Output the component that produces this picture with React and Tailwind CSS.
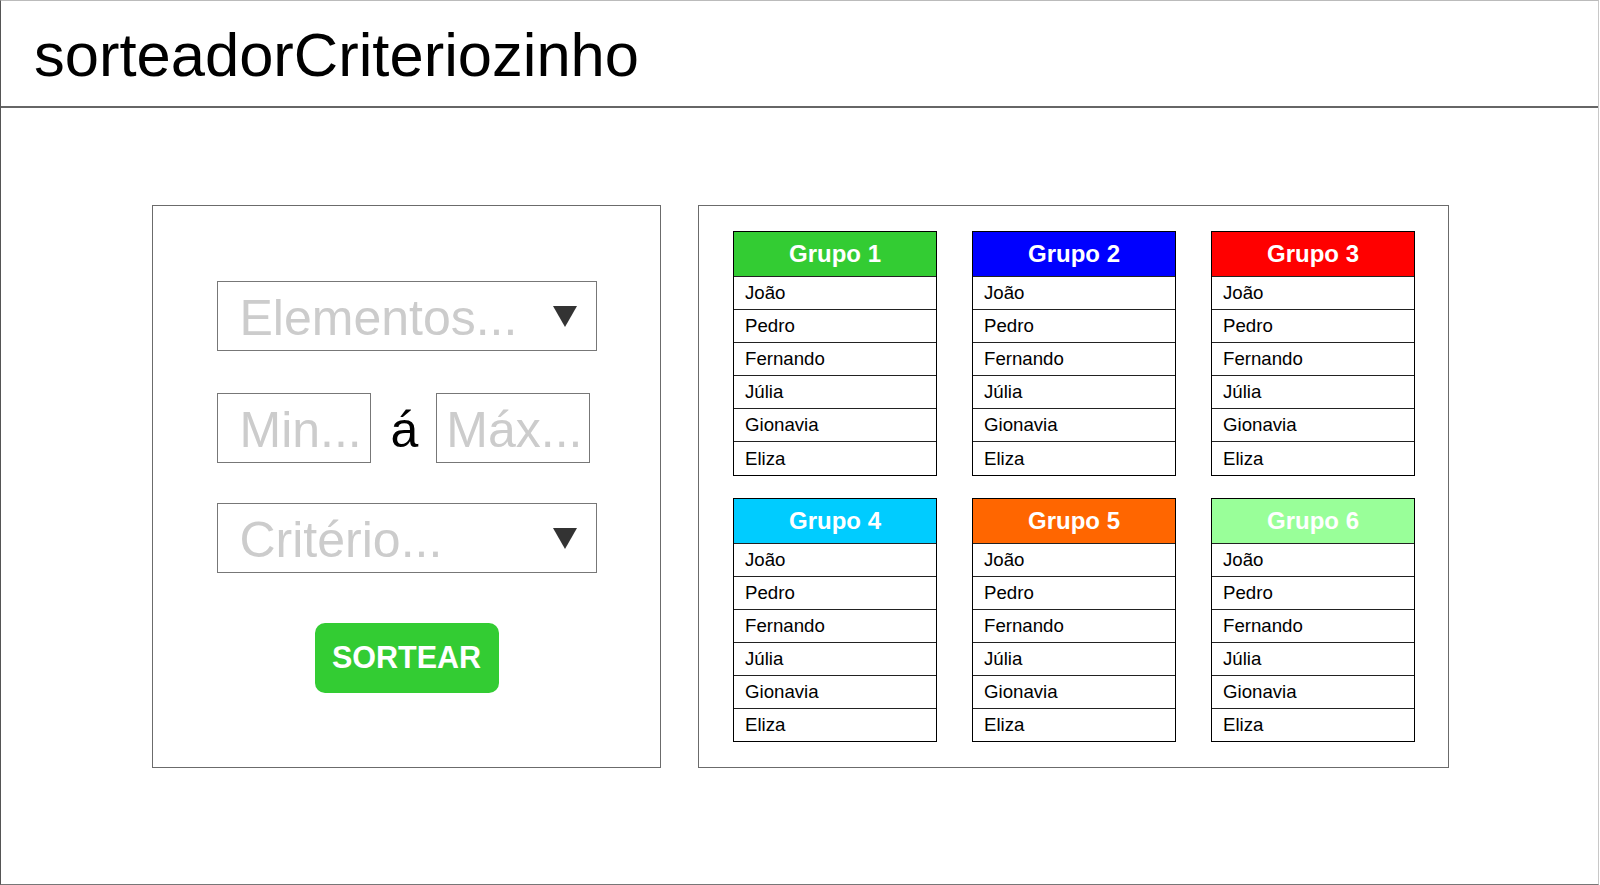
const grupos = [
  { nome: "Grupo 1", cor: "bg-[#33cc33]" },
  { nome: "Grupo 2", cor: "bg-[#0000ff]" },
  { nome: "Grupo 3", cor: "bg-[#ff0000]" },
  { nome: "Grupo 4", cor: "bg-[#00ccff]" },
  { nome: "Grupo 5", cor: "bg-[#ff6600]" },
  { nome: "Grupo 6", cor: "bg-[#99ff99]" },
];

const nomes = ["João", "Pedro", "Fernando", "Júlia", "Gionavia", "Eliza"];

function Seta() {
  return (
    <svg width="24" height="21" viewBox="0 0 24 21" className="shrink-0">
      <polygon points="0,0 24,0 12,21" fill="#333333" />
    </svg>
  );
}

function Select({ texto }) {
  return (
    <div className="flex h-[70px] w-[380px] items-center justify-between border border-[#777] pl-[22px] pr-[19px]">
      <span className="pt-[4px] text-[50px] leading-[50px] text-[#cccccc]">{texto}</span>
      <Seta />
    </div>
  );
}

function Grupo({ nome, cor }) {
  return (
    <div className="w-[204px] border border-black">
      <div className={`flex h-[44px] items-center justify-center text-[24px] font-bold text-white ${cor}`}>
        {nome}
      </div>
      {nomes.map((n) => (
        <div key={n} className="box-border flex h-[33.1px] items-center border-t border-[#222] pl-[11px] text-[18.67px] text-black">
          {n}
        </div>
      ))}
    </div>
  );
}

export default function App() {
  return (
    <div
      className="box-border h-[885px] w-[1599px] border-t border-r border-b border-l border-t-[#bbbbbb] border-r-[#c8c8c8] border-b-[#777777] border-l-[#555555] bg-white"
      style={{ fontFamily: '"Liberation Sans", Arial, sans-serif' }}
    >
      <header className="flex h-[107px] items-start border-b-2 border-[#666] pl-[33px] pt-[23px]">
        <h1 className="text-[61.5px] leading-[61px] text-black">sorteadorCriteriozinho</h1>
      </header>

      <main className="flex gap-[37px] pl-[151px] pt-[97px]">
        <section className="flex h-[563px] w-[509px] flex-col items-center border border-[#6b6b6b] pt-[75px]">
          <Select texto="Elementos..." />

          <div className="mt-[42px] flex h-[70px] w-[380px] items-center">
            <div className="flex h-[70px] w-[154px] items-center border border-[#777] pl-[22px]">
              <span className="pt-[4px] text-[50px] leading-[50px] text-[#cccccc]">Min...</span>
            </div>
            <span className="ml-[20px] mr-[18px] pt-[4px] text-[50px] leading-[50px] text-black">á</span>
            <div className="flex h-[70px] w-[154px] items-center border border-[#777] pl-[9px]">
              <span className="pt-[4px] text-[50px] leading-[50px] text-[#cccccc]">Máx...</span>
            </div>
          </div>

          <div className="mt-[40px]">
            <Select texto="Critério..." />
          </div>

          <button className="mt-[50px] flex h-[70px] w-[184px] items-center justify-center rounded-[10px] bg-[#33cc33] text-[30.5px] font-bold text-white">
            SORTEAR
          </button>
        </section>

        <section className="h-[563px] w-[751px] border border-[#6b6b6b] pl-[34px] pt-[25px]">
          <div className="grid grid-cols-[204px_204px_204px] gap-x-[35px] gap-y-[22px]">
            {grupos.map((g) => (
              <Grupo key={g.nome} nome={g.nome} cor={g.cor} />
            ))}
          </div>
        </section>
      </main>
    </div>
  );
}
